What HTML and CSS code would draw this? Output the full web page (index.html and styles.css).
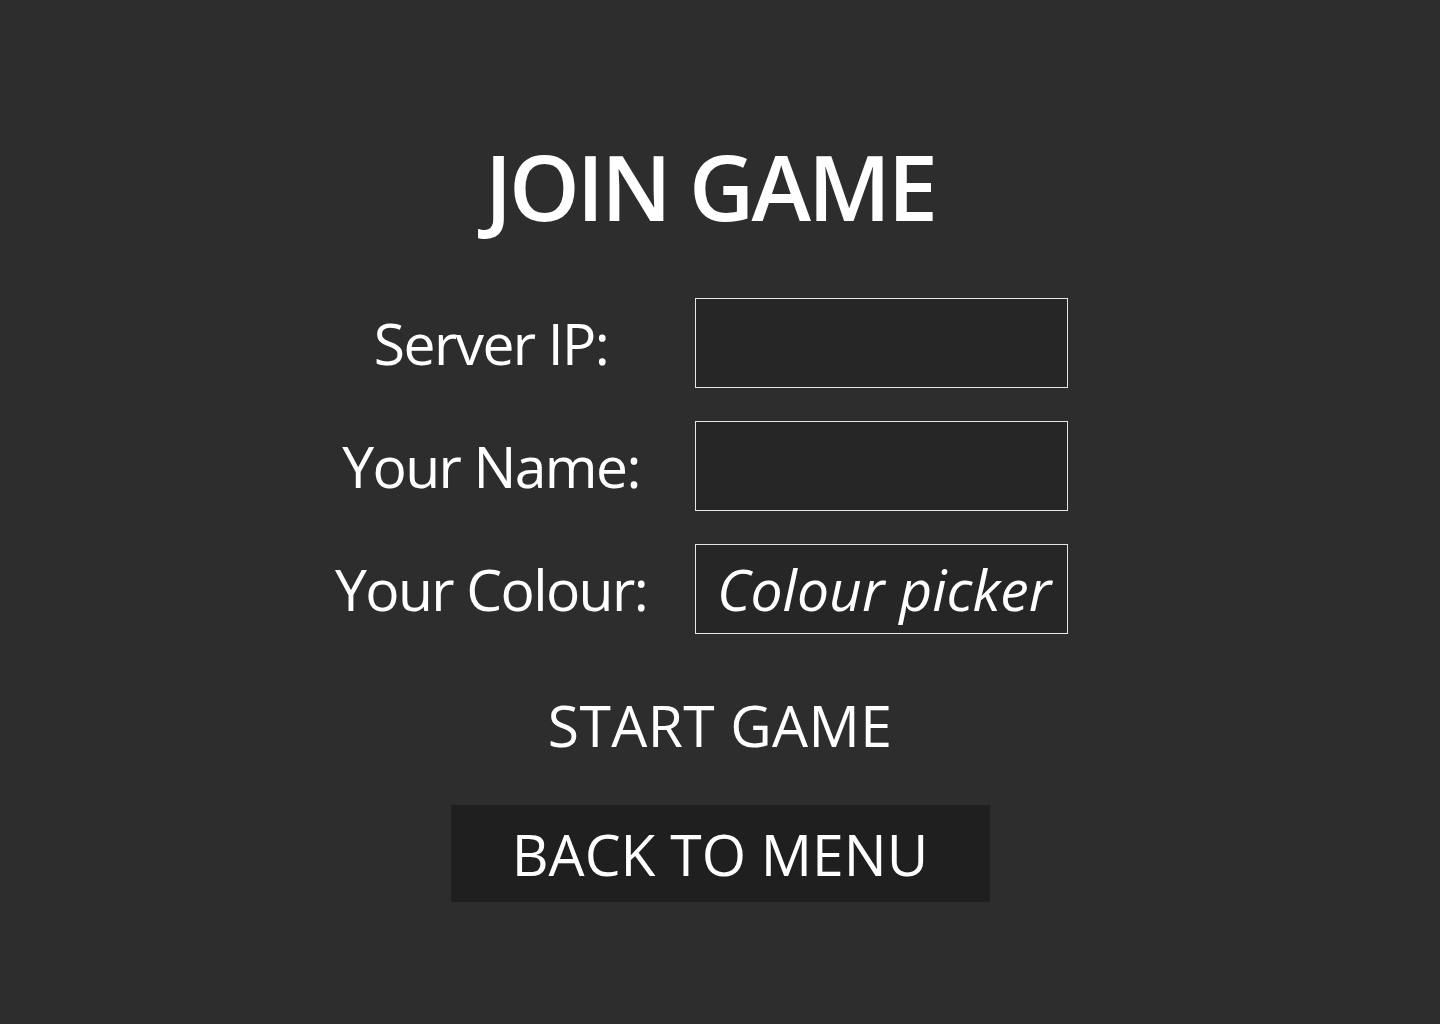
FILE: index.html
```html
<!DOCTYPE html>
<html lang="en">
<head>
<meta charset="utf-8">
<title>Join Game</title>
<link rel="stylesheet" href="styles.css">
</head>
<body>
<main class="screen">
  <h1 class="title">JOIN GAME</h1>
  <form class="form">
    <label class="label" for="ip"><span>Server IP:</span></label>
    <input class="field" id="ip" type="text">
    <label class="label" for="name"><span>Your Name:</span></label>
    <input class="field" id="name" type="text">
    <label class="label"><span>Your Colour:</span></label>
    <div class="field picker">Colour picker</div>
  </form>
  <button class="link-btn" type="button">START GAME</button>
  <button class="menu-btn" type="button">BACK TO MENU</button>
</main>
</body>
</html>
```
FILE: styles.css
```css
html, body {
  margin: 0;
  padding: 0;
  background: #2d2d2d;
  height: 100%;
}
body {
  font-family: "Open Sans", "Noto Sans", sans-serif;
  color: #ffffff;
}
.screen {
  display: flex;
  flex-direction: column;
  align-items: center;
  padding-top: 141px;
}
.title {
  margin: 0;
  padding-right: 20px;
  font-size: 90px;
  line-height: 1;
  font-weight: 600;
  letter-spacing: -3px;
}
.form {
  margin-top: 67px;
  display: grid;
  grid-template-columns: 238px 373px;
  column-gap: 85px;
  row-gap: 33px;
  justify-content: center;
}
.label {
  display: flex;
  align-items: center;
  justify-content: center;
  white-space: nowrap;
  font-size: 57px;
  line-height: 1;
  letter-spacing: -1.6px;
}
.field {
  box-sizing: border-box;
  width: 373px;
  height: 90px;
  margin: 0;
  border: 1px solid #e6e6e6;
  background: #262626;
  color: #fff;
  font-family: inherit;
  font-size: 57px;
  padding: 0 21px;
  outline: none;
}
.picker {
  display: flex;
  align-items: center;
  font-style: italic;
  white-space: nowrap;
  overflow: hidden;
}
.link-btn {
  margin-top: 63px;
  background: none;
  border: 0;
  padding: 0;
  color: #fff;
  font-family: inherit;
  font-size: 57px;
  line-height: 1;
  letter-spacing: 0.4px;
}
.menu-btn {
  margin-top: 51px;
  background: #1f1f1f;
  border: 0;
  width: 539px;
  padding: 21px 0 19px;
  color: #fff;
  font-family: inherit;
  font-size: 57px;
  line-height: 1;
}
```
